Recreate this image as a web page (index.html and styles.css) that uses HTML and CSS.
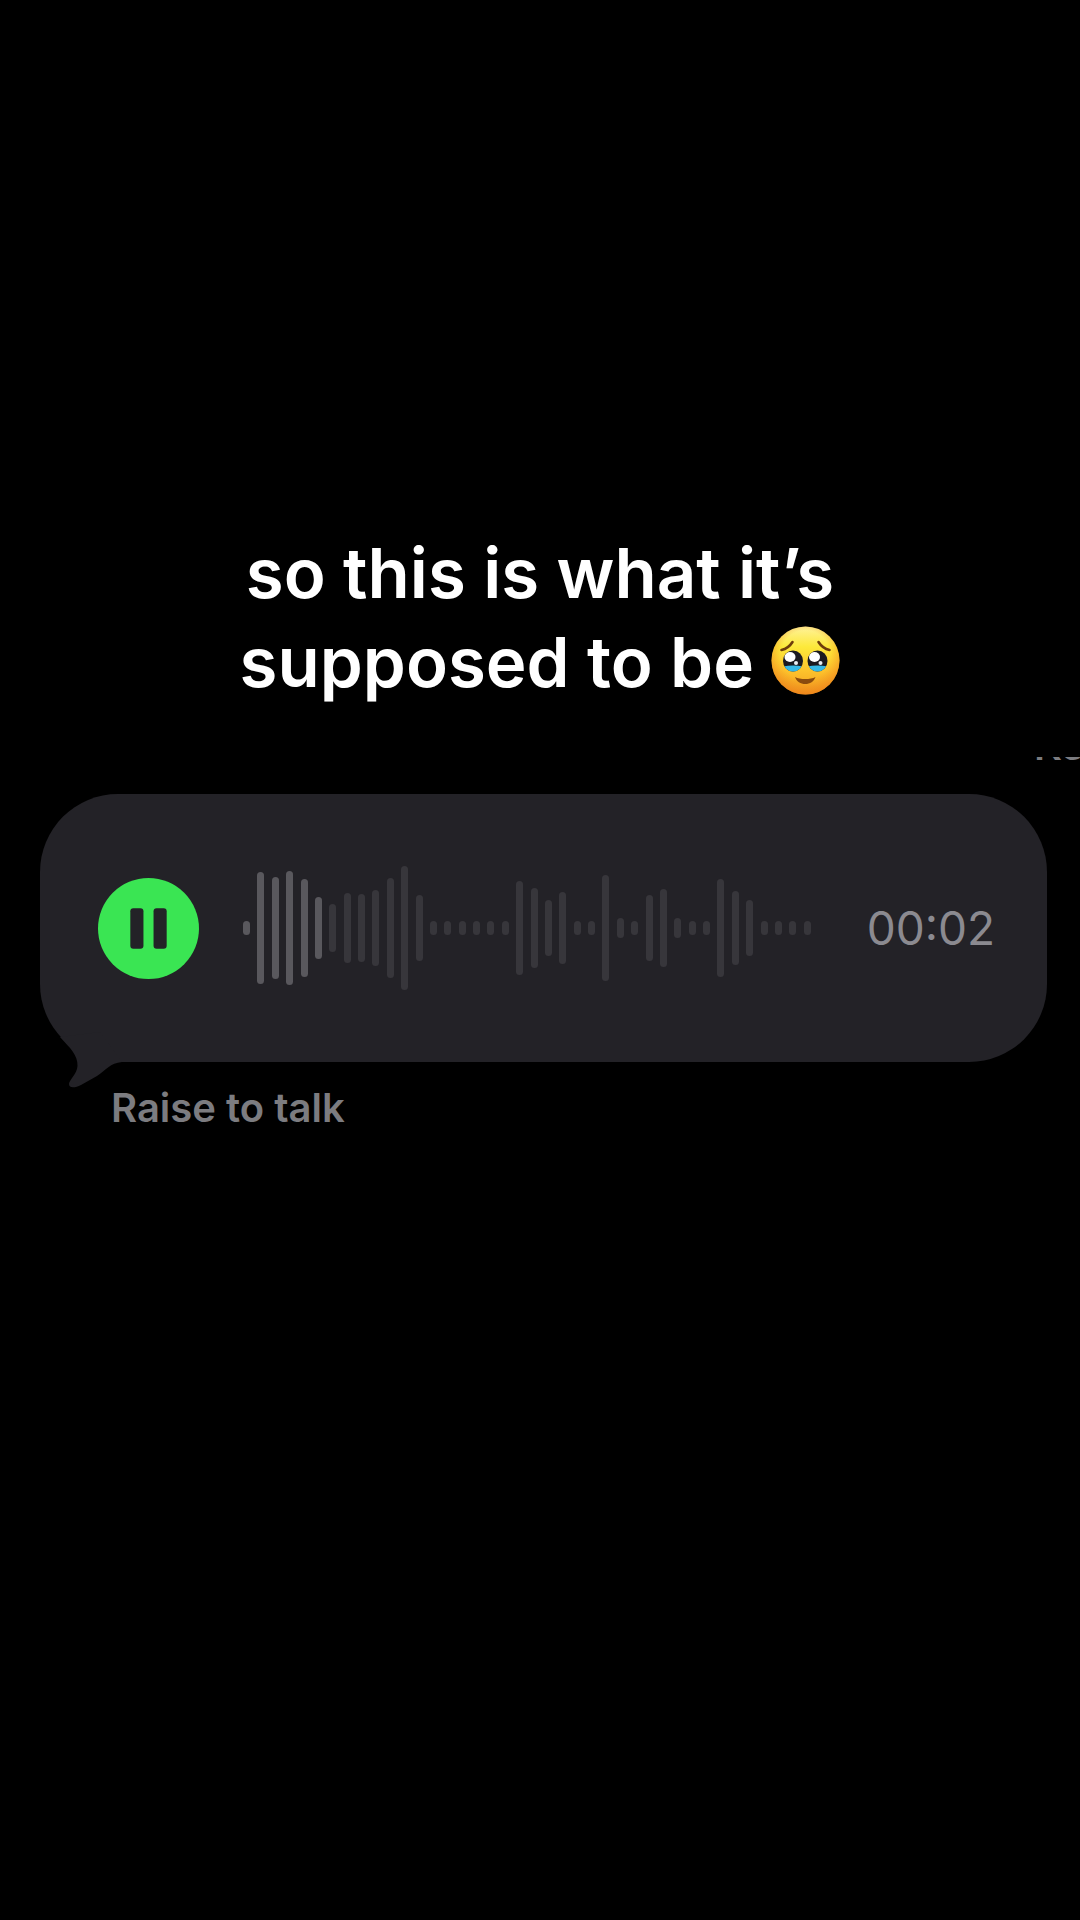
FILE: index.html
```
<!DOCTYPE html>
<html lang="en">
<head>
  <meta charset="UTF-8">
  <title>Voice Message</title>
  <link rel="stylesheet" href="styles.css">
</head>
<body>
  <h1 class="caption">so this is what it’s<br>supposed to be
    <svg class="emoji" viewBox="0 0 69 69" role="img" aria-label="face holding back tears">
      <defs>
        <linearGradient id="face" x1="0" y1="0" x2="0" y2="1">
          <stop offset="0" stop-color="#fff29a"/>
          <stop offset="0.3" stop-color="#fde93a"/>
          <stop offset="0.65" stop-color="#fdc32c"/>
          <stop offset="1" stop-color="#f19a1f"/>
        </linearGradient>
        <radialGradient id="edge" cx="0.5" cy="0.42" r="0.6">
          <stop offset="0.6" stop-color="#f08a1d" stop-opacity="0"/>
          <stop offset="1" stop-color="#ee7d1a" stop-opacity="0.75"/>
        </radialGradient>
        <clipPath id="leftEye"><ellipse cx="22" cy="35" rx="10" ry="10.5"/></clipPath>
        <clipPath id="rightEye"><ellipse cx="46.500" cy="35" rx="10" ry="10.5"/></clipPath>
      </defs>
      <circle cx="34.500" cy="34.500" r="34" fill="url(#face)"/>
      <circle cx="34.500" cy="34.500" r="34" fill="url(#edge)"/>
      <path d="M10.500 24c4.500-1 8.500-4 11-8M58.500 24c-4.500-1-8.500-4-11-8" fill="none" stroke="#6e3d0b" stroke-width="2.600" stroke-linecap="round"/>
      <g clip-path="url(#leftEye)">
        <rect x="12" y="24" width="20" height="22" fill="#1b1a20"/>
        <path d="M12 40.500q10-2 20 0v6H12z" fill="#35b8e6"/>
        <ellipse cx="19" cy="31" rx="5.500" ry="5" fill="#fff"/>
        <circle cx="25" cy="37" r="2" fill="#e9edf2"/>
      </g>
      <g clip-path="url(#rightEye)">
        <rect x="36" y="24" width="21" height="22" fill="#1b1a20"/>
        <path d="M36 40.500q10-2 21 0v6H36z" fill="#35b8e6"/>
        <ellipse cx="43.500" cy="31" rx="5.500" ry="5" fill="#fff"/>
        <circle cx="49.500" cy="37" r="2" fill="#e9edf2"/>
      </g>
      <path d="M24 51c5 2.800 15.500 2.800 20.500 0-1.500 4.500-5.500 7-10.200 7S25.500 55.500 24 51z" fill="#8a4b0e"/>
    </svg>
  </h1>

  <div class="previous"><span>Keep</span></div>

  <div class="bubble">
    <button type="button" class="pause" aria-label="Pause">
      <svg viewBox="0 0 100 100" aria-hidden="true">
        <rect x="32" y="30" width="13" height="40" rx="3"/>
        <rect x="55" y="30" width="13" height="40" rx="3"/>
      </svg>
    </button>
    <div class="wave">
      <i class="played"></i>
      <i class="played" style="height: 112px"></i>
      <i class="played" style="height: 102px"></i>
      <i class="played" style="height: 114px"></i>
      <i class="played" style="height: 98px"></i>
      <i class="played" style="height: 62px"></i>
      <i style="height: 48px"></i>
      <i style="height: 70px"></i>
      <i style="height: 68px"></i>
      <i style="height: 76px"></i>
      <i style="height: 100px"></i>
      <i style="height: 124px"></i>
      <i style="height: 66px"></i>
      <i></i>
      <i></i>
      <i></i>
      <i></i>
      <i></i>
      <i></i>
      <i style="height: 94px"></i>
      <i style="height: 80px"></i>
      <i style="height: 56px"></i>
      <i style="height: 72px"></i>
      <i></i>
      <i></i>
      <i style="height: 106px"></i>
      <i style="height: 20px"></i>
      <i></i>
      <i style="height: 66px"></i>
      <i style="height: 78px"></i>
      <i style="height: 20px"></i>
      <i></i>
      <i></i>
      <i style="height: 98px"></i>
      <i style="height: 74px"></i>
      <i style="height: 56px"></i>
      <i></i>
      <i></i>
      <i></i>
      <i></i>
    </div>
    <span class="time">00:02</span>
    <svg class="tail" viewBox="0 0 100 67" aria-hidden="true">
      <path d="M20 15C30 26 38 33 37.500 44C37 52 29 58 29 62C29 66.500 35 66 41 63L57 54C66 48 70 41 82 40L60 10Z"/>
    </svg>
  </div>

  <p class="hint">Raise to talk</p>
</body>
</html>
```

FILE: styles.css
```
body {
  margin: 0;
  padding-top: 529px;
  background-color: #000;
  font-family: Inter, "Liberation Sans", sans-serif;
  overflow-x: hidden;
}

.caption {
  margin: 0;
  color: #fff;
  font-size: 69px;
  font-weight: 600;
  line-height: 89px;
  text-align: center;
}

.emoji {
  width: 69px;
  height: 69px;
  vertical-align: -8px;
}

/* last line of the message above, cut off by the edge */
.previous {
  display: flex;
  justify-content: flex-end;
  align-items: flex-end;
  height: 9px;
  margin-top: 50px;
  overflow: hidden;
  color: #7c7c80;
  font-size: 40px;
  font-weight: 600;
  line-height: 40px;
}

.previous span {
  width: 46px;
}

.bubble {
  position: relative;
  display: flex;
  align-items: center;
  margin: 28px 33px 0 40px;
  padding: 72px 52px 72px 58px;
  border-radius: 78px;
  background-color: #232227;
}

.pause {
  flex: none;
  width: 101px;
  height: 101px;
  padding: 0;
  border: none;
  border-radius: 50%;
  background-color: #3ae553;
  cursor: pointer;
}

.pause svg {
  display: block;
  width: 100%;
  fill: #232227;
}

.wave {
  display: flex;
  flex: 1;
  justify-content: space-between;
  align-items: center;
  height: 124px;
  margin: 0 56px 0 44px;
}

.wave i {
  width: 7px;
  height: 14px;
  border-radius: 4px;
  background-color: #37363b;
}

.wave .played {
  background-color: #59585d;
}

.time {
  color: #8b8a90;
  font-size: 46px;
  font-weight: 400;
}

.tail {
  position: absolute;
  left: 0;
  bottom: -27px;
  width: 100px;
  height: 67px;
  fill: #232227;
}

.hint {
  margin: 22px 0 0 111px;
  color: #7c7c80;
  font-size: 40px;
  font-weight: 600;
  line-height: 48px;
}
```
